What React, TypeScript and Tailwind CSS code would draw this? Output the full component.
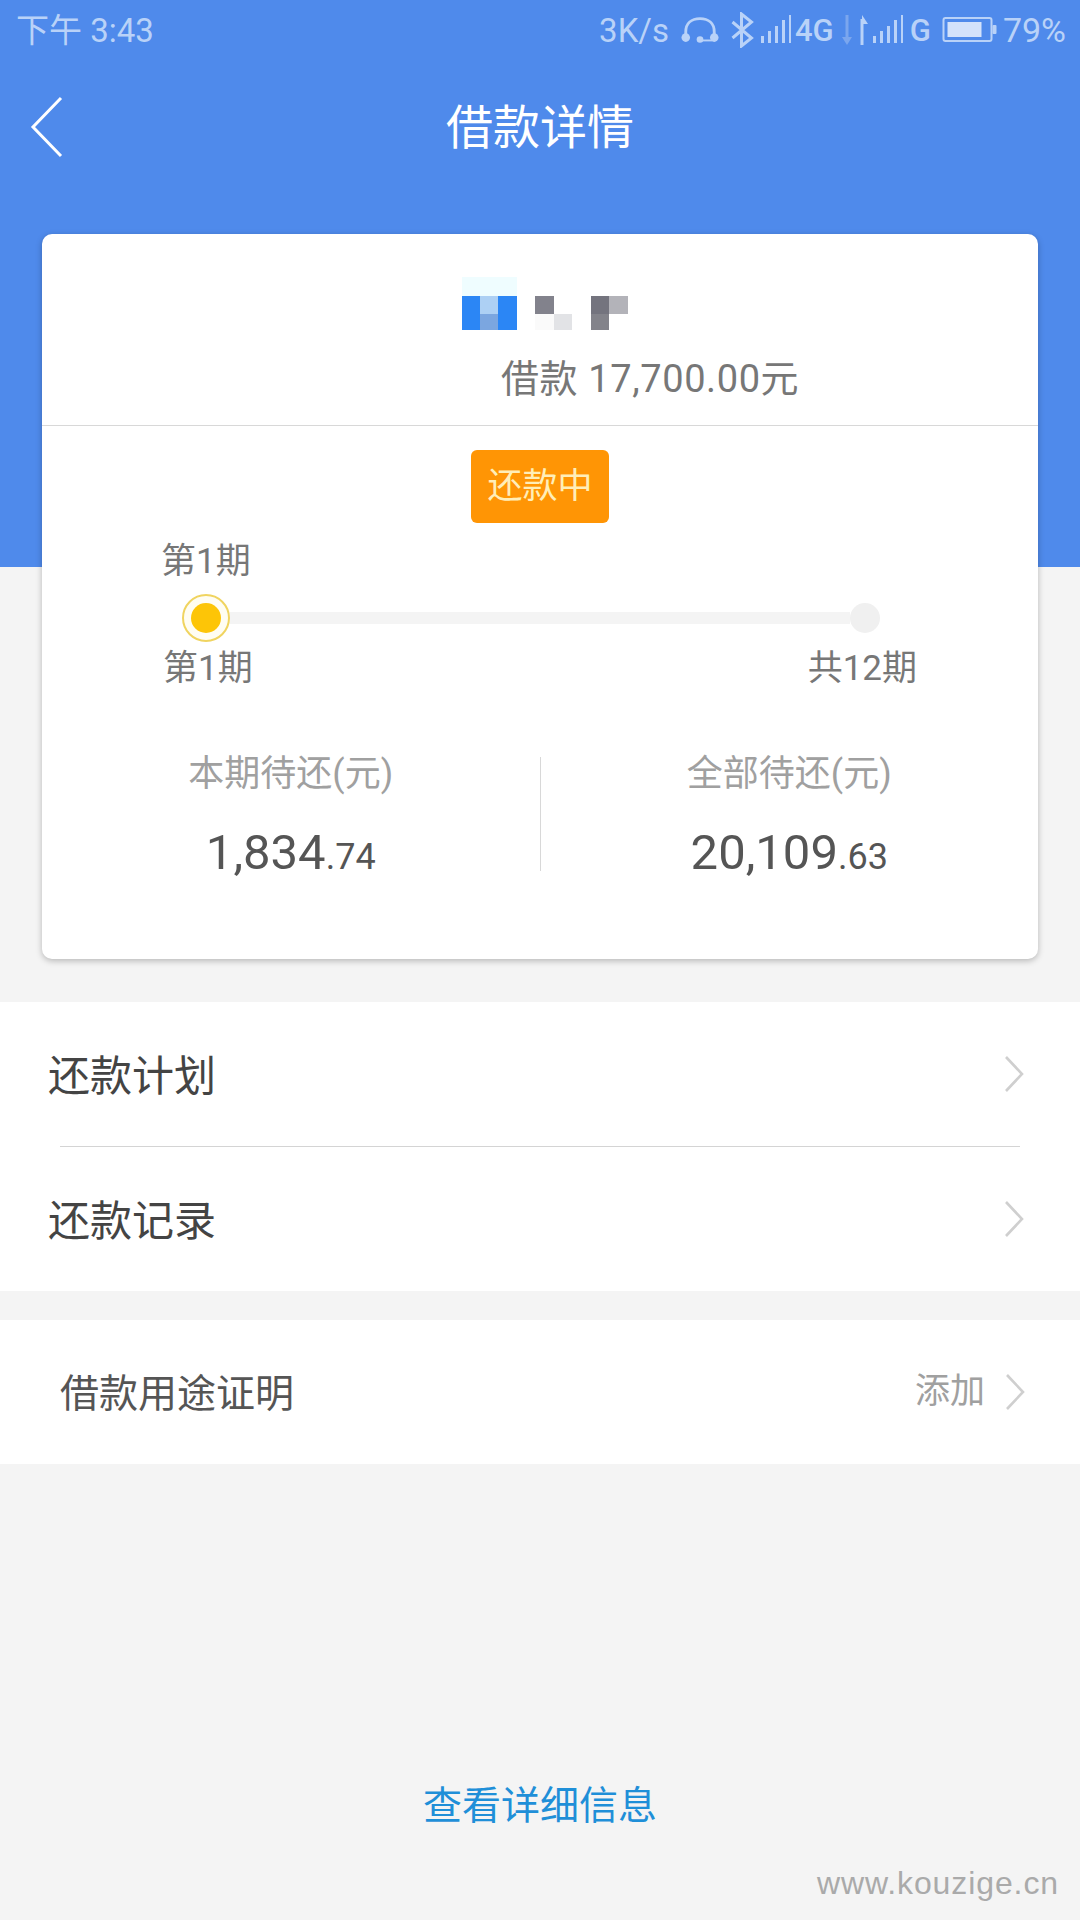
import React from 'react';

const FONT = "font-['Roboto','Noto_Sans_CJK_SC',sans-serif]";

const Chevron: React.FC = () => (
  <svg width="20" height="36" viewBox="0 0 20 36" fill="none" className="shrink-0">
    <path d="M2 1 L18 18 L2 35" stroke="#cfcfcf" strokeWidth="2.6" />
  </svg>
);

const SignalBars: React.FC = () => (
  <svg width="31" height="30" viewBox="0 0 31 30" fill="#b9d2f8">
    <rect x="0" y="21" width="3" height="7" />
    <rect x="7" y="16" width="3" height="12" />
    <rect x="14" y="11" width="3" height="17" />
    <rect x="21" y="5" width="3" height="23" />
    <rect x="28" y="0" width="2" height="28" />
  </svg>
);

const StatusBar: React.FC = () => (
  <div className="flex h-[60px] items-center justify-between pl-[16px] pr-[14px] text-[#b9d2f8]">
    <span className="text-[33px] leading-none">下午 3:43</span>
    <div className="flex items-center">
      <span className="text-[33px] leading-none">3K/s</span>
      <svg width="38" height="28" viewBox="0 0 40 28" fill="none" className="ml-[12px]">
        <path d="M5 22 V16 C5 7 11 2 20 2 C29 2 35 7 35 16 V22" stroke="#b9d2f8" strokeWidth="3" />
        <circle cx="5" cy="22" r="4.5" fill="#b9d2f8" />
        <circle cx="35" cy="22" r="4.5" fill="#b9d2f8" />
        <circle cx="20" cy="24" r="3.5" fill="#b9d2f8" />
        <path d="M20 25 H33" stroke="#b9d2f8" strokeWidth="2" />
      </svg>
      <svg width="25" height="36" viewBox="0 0 24 36" fill="none" className="ml-[11px]">
        <path d="M2 10 L21 26 L11 34 V2 L21 10 L2 26" stroke="#b9d2f8" strokeWidth="3" />
      </svg>
      <div className="ml-[6px]">
        <SignalBars />
      </div>
      <span className="ml-[3px] text-[31px] font-medium leading-none">4G</span>
      <svg width="26" height="34" viewBox="0 0 26 34" fill="none" className="ml-[8px]">
        <path d="M5 2 V28" stroke="#7ba6ee" strokeWidth="3" />
        <path d="M0 24 L5 32 L10 24 Z" fill="#7ba6ee" />
        <path d="M20 32 V6" stroke="#b9d2f8" strokeWidth="3" />
        <path d="M20 2 L26 11 H20 Z" fill="#b9d2f8" />
      </svg>
      <div className="ml-[5px]">
        <SignalBars />
      </div>
      <span className="ml-[6px] text-[31px] font-medium leading-none">G</span>
      <svg width="57" height="26" viewBox="0 0 54 26" fill="none" className="ml-[10px]">
        <rect x="1" y="1" width="48" height="23" rx="2" stroke="#b9d2f8" strokeWidth="2" />
        <rect x="5" y="5" width="34" height="15" fill="#d3e2fb" />
        <rect x="50" y="8" width="4" height="9" rx="1" fill="#b9d2f8" />
      </svg>
      <span className="ml-[5px] text-[34px] leading-none">79%</span>
    </div>
  </div>
);

const Header: React.FC = () => (
  <div className="h-[567px] bg-[#4f8aeb]">
    <StatusBar />
    <div className="flex h-[134px] items-center pl-[30px]">
      <svg width="34" height="62" viewBox="0 0 34 62" fill="none" className="shrink-0">
        <path d="M31 2 L3 31 L31 60" stroke="#ffffff" strokeWidth="3" />
      </svg>
      <h1 className="flex-1 pr-[64px] pt-[2px] text-center text-[47px] font-normal text-white">借款详情</h1>
    </div>
  </div>
);

const Mosaic: React.FC = () => (
  <svg width="166" height="53" viewBox="0 0 166 53" className="block">
    <rect x="0" y="0" width="55" height="19" fill="#effdff" />
    <rect x="0" y="19" width="18" height="34" fill="#2b86f5" />
    <rect x="18" y="19" width="18" height="18" fill="#add0f4" />
    <rect x="18" y="37" width="18" height="16" fill="#7ba6e0" />
    <rect x="36" y="19" width="19" height="34" fill="#2b86f5" />
    <rect x="73" y="19" width="19" height="18" fill="#82828c" />
    <rect x="92" y="37" width="18" height="16" fill="#e2e3e6" />
    <rect x="73" y="37" width="19" height="16" fill="#fafafa" />
    <rect x="129" y="19" width="18" height="18" fill="#74747e" />
    <rect x="129" y="37" width="18" height="16" fill="#83838a" />
    <rect x="147" y="19" width="19" height="18" fill="#b3b3b9" />
  </svg>
);

const Amount: React.FC<{ label: string; whole: string; cents: string }> = ({ label, whole, cents }) => (
  <div className="flex flex-1 flex-col items-center">
    <span className="text-[36px] leading-[44px] text-[#a0a0a0]">{label}</span>
    <p className="mt-[27px] leading-[60px] text-[#555555]">
      <span className="text-[49px]">{whole}</span>
      <span className="text-[36px]">{cents}</span>
    </p>
  </div>
);

const LoanCard: React.FC = () => (
  <div className="mx-[42px] -mt-[333px] h-[725px] rounded-[10px] bg-white shadow-[0_2px_6px_rgba(0,0,0,0.25)]">
    <div className="h-[192px] border-b border-[#d8d8d8] pt-[43px]">
      <div className="ml-[420px]">
        <Mosaic />
      </div>
      <p className="mt-[24px] pl-[459px] text-[38px] leading-[50px] tracking-[0.6px] text-[#777777]">借款 17,700.00元</p>
    </div>

    <div className="mt-[24px] flex justify-center">
      <span className="flex h-[73px] w-[138px] items-center justify-center rounded-[6px] bg-[#ff9505] pt-[2px] text-[35px] text-[#ffeeb8]">
        还款中
      </span>
    </div>

    <p className="mt-[17px] pl-[119px] text-[35px] leading-[44px] text-[#777777]">第1期</p>

    <div className="mt-[10px] flex items-center pl-[140px] pr-[158px]">
      <div className="flex h-[48px] w-[48px] shrink-0 items-center justify-center rounded-full border-2 border-[#f0d460] bg-[#fffdf2]">
        <div className="h-[30px] w-[30px] rounded-full bg-[#fdc507]" />
      </div>
      <div className="h-[12px] flex-1 bg-[#f4f4f4]" />
      <div className="h-[30px] w-[30px] shrink-0 rounded-full bg-[#f0f0f0]" />
    </div>

    <div className="mt-[5px] flex justify-between pl-[121px] pr-[121px] text-[35px] leading-[44px] text-[#777777]">
      <span>第1期</span>
      <span>共12期</span>
    </div>

    <div className="mt-[61px] flex">
      <Amount label="本期待还(元)" whole="1,834" cents=".74" />
      <div className="mt-[5px] h-[114px] w-px shrink-0 bg-[#d8d8d8]" />
      <Amount label="全部待还(元)" whole="20,109" cents=".63" />
    </div>
  </div>
);

const App: React.FC = () => {
  return (
    <div className={`${FONT} flex h-[1920px] w-[1080px] flex-col overflow-hidden bg-[#f4f4f4]`}>
      <Header />
      <LoanCard />

      <div className="mt-[43px] bg-white">
        <div className="flex h-[144px] items-center justify-between pl-[48px] pr-[56px] text-[42px] text-[#444444]">
          <span className="pt-[4px]">还款计划</span>
          <Chevron />
        </div>
        <div className="mx-[60px] h-px bg-[#d4d4d4]" />
        <div className="flex h-[144px] items-center justify-between pl-[48px] pr-[56px] text-[42px] text-[#444444]">
          <span className="pt-[4px]">还款记录</span>
          <Chevron />
        </div>
      </div>

      <div className="mt-[29px] flex h-[144px] items-center bg-white pl-[60px] pr-[55px] text-[39px] text-[#555555]">
        <span className="flex-1 pt-[4px]">借款用途证明</span>
        <span className="mr-[20px] text-[35px] text-[#a0a0a0]">添加</span>
        <Chevron />
      </div>

      <p className="mt-[314px] text-center text-[39px] leading-[56px] text-[#1f8fd8]">查看详细信息</p>

      <p className="mt-[29px] pr-[21px] text-right font-['Liberation_Sans',sans-serif] text-[32px] leading-[40px] tracking-[0.9px] text-[#aaaaaa]">
        www.kouzige.cn
      </p>
    </div>
  );
};

export default App;
